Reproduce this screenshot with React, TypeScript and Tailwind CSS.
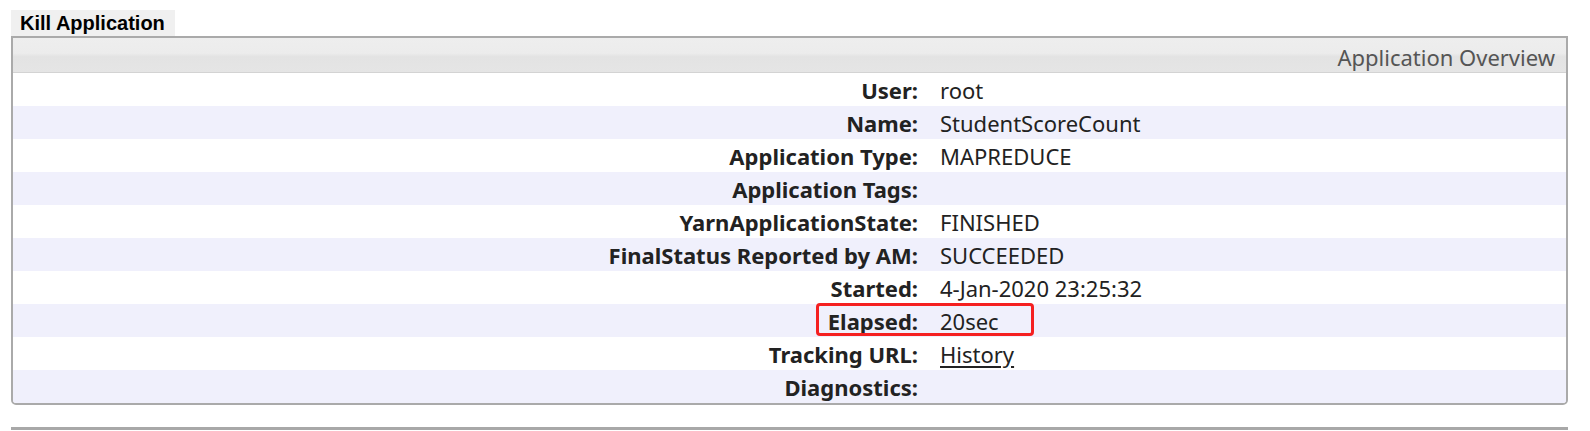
import React from "react";

const rows: { label: string; value: string; link?: boolean }[] = [
  { label: "User:", value: "root" },
  { label: "Name:", value: "StudentScoreCount" },
  { label: "Application Type:", value: "MAPREDUCE" },
  { label: "Application Tags:", value: "" },
  { label: "YarnApplicationState:", value: "FINISHED" },
  { label: "FinalStatus Reported by AM:", value: "SUCCEEDED" },
  { label: "Started:", value: "4-Jan-2020 23:25:32" },
  { label: "Elapsed:", value: "20sec" },
  { label: "Tracking URL:", value: "History", link: true },
  { label: "Diagnostics:", value: "" },
];

export default function App() {
  return (
    <div className="relative w-[1590px] h-[431px] bg-white pt-[10px] pl-[11px]">
      <div
        className="inline-flex h-[26px] items-center bg-[#f0f0f0] pl-[9px] pr-[10px] text-[20px] font-bold leading-[26px] text-black"
        style={{ fontFamily: '"Liberation Sans", Arial, sans-serif' }}
      >
        Kill Application
      </div>
      <div
        className="w-[1557px] rounded-b-[5px] border-2 border-[#aaaaaa] text-[#222222]"
        style={{ fontFamily: '"Noto Sans", "Open Sans", sans-serif' }}
      >
        <div className="flex h-[35px] items-center justify-end border-b border-[#d3d3d3] bg-[linear-gradient(to_bottom,#eeeeee_0%,#ececec_45%,#e3e3e3_55%,#e5e5e5_100%)] pr-[11px] pt-[3px] text-[22px] leading-[30px] text-[#555555]">
          Application Overview
        </div>
        <div className="flex flex-col">
          {rows.map((r, i) => (
            <div
              key={r.label}
              className={`grid h-[33px] grid-cols-[916px_1fr] items-center text-[22px] leading-[30px] ${
                i % 2 === 1 ? "bg-[#f0f0fc]" : "bg-white"
              } ${i === rows.length - 1 ? "rounded-b-[3px]" : ""}`}
            >
              <div className="pr-[11px] text-right font-bold">{r.label}</div>
              <div className="pl-[11px]">
                {r.link ? <span className="underline underline-offset-[3px]">{r.value}</span> : r.value}
              </div>
            </div>
          ))}
        </div>
      </div>
      <div className="mt-[22px] h-[3px] w-[1557px] bg-[#a8a8a8]" />
      <div className="pointer-events-none absolute left-[816px] top-[303px] h-[33px] w-[218px] rounded-[4px] border-[3px] border-[#f52020]" />
    </div>
  );
}
